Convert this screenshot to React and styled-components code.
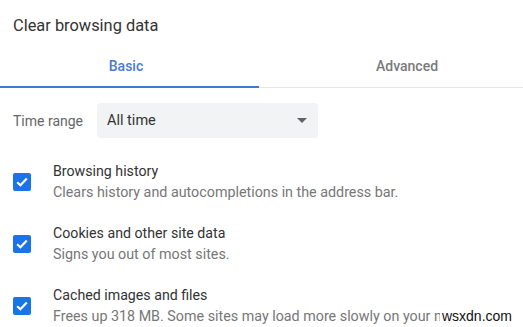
import React from 'react';
import styled, { createGlobalStyle } from 'styled-components';

const GlobalStyle = createGlobalStyle`
  html, body {
    margin: 0;
    padding: 0;
    background: #fff;
  }
  body {
    font-family: Roboto, "Liberation Sans", Arial, sans-serif;
    overflow: hidden;
  }
`;

const options = [
  { title: 'Browsing history', desc: 'Clears history and autocompletions in the address bar.' },
  { title: 'Cookies and other site data', desc: 'Signs you out of most sites.' },
  { title: 'Cached images and files', desc: 'Frees up 318 MB. Some sites may load more slowly on your next visit.' },
];

const App = () => {
  return (
    <Page>
      <GlobalStyle />
      <Title>Clear browsing data</Title>
      <TabBar>
        <Tab active width={259}>Basic</Tab>
        <Tab width={296}>Advanced</Tab>
      </TabBar>
      <TimeRow>
        <Label>Time range</Label>
        <Select>
          <span>All time</span>
          <Arrow />
        </Select>
      </TimeRow>
      <List>
        {options.map((o) => (
          <Row key={o.title}>
            <Check>
              <svg width="12" height="10" viewBox="0 0 12 10">
                <path d="M1.2 5.2 L4.4 8.2 L10.8 1.6" fill="none" stroke="#fff" strokeWidth="2.2" />
              </svg>
            </Check>
            <TextCol>
              <RowTitle>{o.title}</RowTitle>
              <RowDesc>{o.desc}</RowDesc>
            </TextCol>
          </Row>
        ))}
      </List>
      <Watermark>wsxdn.com</Watermark>
    </Page>
  );
};

export default App;

const Page = styled.div`
  position: relative;
  width: 523px;
  height: 327px;
  overflow: hidden;
  background: #fff;
`;

const Title = styled.div`
  height: 44px;
  box-sizing: border-box;
  padding: 16px 13px 0;
  font-size: 16.4px;
  line-height: 20px;
  color: #333;
`;

const TabBar = styled.div`
  display: flex;
  width: 555px;
  box-shadow: inset 0 -1px 0 #e6e6e6;
`;

const Tab = styled.div`
  flex: 0 0 ${(p) => p.width}px;
  height: 44px;
  box-sizing: border-box;
  padding-top: 1px;
  display: flex;
  align-items: center;
  justify-content: center;
  font-size: 14px;
  font-weight: 500;
  color: ${(p) => (p.active ? '#4a7bd2' : '#7a7a7a')};
  border-bottom: 2px solid ${(p) => (p.active ? '#3b78d8' : 'transparent')};
  text-indent: ${(p) => (p.active ? '-7px' : '0')};
`;

const TimeRow = styled.div`
  display: flex;
  align-items: center;
  gap: 13px;
  margin-top: 15px;
  padding-left: 13px;
`;

const Label = styled.div`
  width: 71px;
  font-size: 14px;
  color: #666;
  white-space: nowrap;
`;

const Select = styled.div`
  width: 221px;
  height: 35px;
  box-sizing: border-box;
  padding: 0 11px 0 10px;
  display: flex;
  align-items: center;
  justify-content: space-between;
  background: #f1f3f4;
  border-radius: 4px;
  font-size: 14.5px;
  color: #333;
`;

const Arrow = styled.div`
  width: 0;
  height: 0;
  border-left: 5px solid transparent;
  border-right: 5px solid transparent;
  border-top: 5px solid #5f6368;
`;

const List = styled.div`
  display: flex;
  flex-direction: column;
  gap: 21px;
  margin-top: 23px;
  padding-left: 13px;
`;

const Row = styled.div`
  display: flex;
  align-items: center;
  gap: 22px;
`;

const Check = styled.div`
  width: 18px;
  height: 18px;
  flex-shrink: 0;
  border-radius: 2px;
  background: #1a73e8;
  display: flex;
  align-items: center;
  justify-content: center;
`;

const TextCol = styled.div`
  display: flex;
  flex-direction: column;
  gap: 1px;
`;

const RowTitle = styled.div`
  font-size: 14.2px;
  line-height: 20px;
  color: #333;
  white-space: nowrap;
`;

const RowDesc = styled.div`
  font-size: 14.3px;
  line-height: 20px;
  color: #777;
  white-space: nowrap;
`;

const Watermark = styled.div`
  position: absolute;
  right: 9px;
  bottom: 2px;
  padding: 0 2px;
  background: #fff;
  font-family: "Liberation Sans", Arial, sans-serif;
  font-size: 14px;
  line-height: 17px;
  color: #111;
`;
